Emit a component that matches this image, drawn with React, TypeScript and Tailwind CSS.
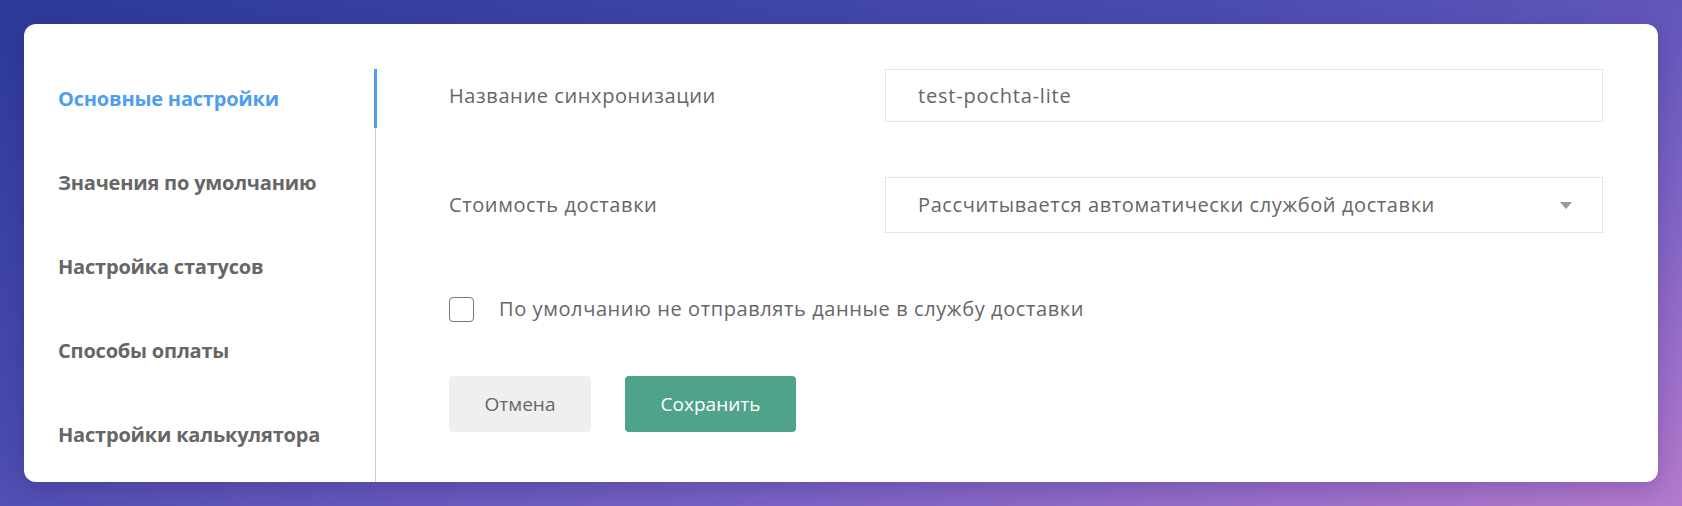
import { useState } from "react"

const navItems = [
  "Основные настройки",
  "Значения по умолчанию",
  "Настройка статусов",
  "Способы оплаты",
  "Настройки калькулятора",
]

export default function App() {
  const [active, setActive] = useState(0)
  const [name, setName] = useState("test-pochta-lite")
  const [skipSend, setSkipSend] = useState(false)

  return (
    <div
      className="min-h-[506px] w-full p-6 bg-[linear-gradient(160deg,#2c3a98_0%,#4a4cb0_40%,#7a62c4_70%,#b57acd_100%)]"
      style={{ fontFamily: '"Open Sans", "Noto Sans", sans-serif' }}
    >
      <div className="flex h-[458px] rounded-xl bg-white pt-[45px] shadow-[0_6px_24px_rgba(40,20,90,0.25)]">
        {/* sidebar */}
        <nav className="flex w-[352px] shrink-0 flex-col gap-[25px] border-r border-[#cfcfcf] pl-[34px]">
          {navItems.map((item, i) => (
            <button
              key={item}
              onClick={() => setActive(i)}
              className={`relative flex h-[59px] items-center text-left text-[20px] font-bold tracking-[-0.2px] ${
                i === active ? "text-[#4d9ef0]" : "text-[#666666]"
              }`}
            >
              {item}
              {i === active && <span className="absolute -right-[2px] top-0 h-full w-[3px] bg-[#4d9ef0]" />}
            </button>
          ))}
        </nav>

        {/* form */}
        <div className="flex flex-1 flex-col pl-[73px] pr-[55px] text-[20px] tracking-[0.6px] text-[#666666]">
          <div className="flex h-[53px] items-center">
            <label className="w-[436px] shrink-0">Название синхронизации</label>
            <input
              value={name}
              onChange={(e) => setName(e.target.value)}
              className="h-full flex-1 border border-[#e3e3e3] px-8 tracking-[0.8px] text-[#666666] outline-none"
            />
          </div>

          <div className="mt-[55px] flex h-[56px] items-center">
            <label className="w-[436px] shrink-0">Стоимость доставки</label>
            <div className="flex h-full flex-1 items-center justify-between border border-[#e3e3e3] pl-8 pr-[30px]">
              <span>Рассчитывается автоматически службой доставки</span>
              <svg width="12" height="7" viewBox="0 0 12 7">
                <path d="M0 0h12L6 7z" fill="#9a9a9a" />
              </svg>
            </div>
          </div>

          <label className="mt-[63px] flex h-[26px] cursor-pointer items-center gap-[25px]">
            <span
              onClick={() => setSkipSend(!skipSend)}
              className="flex h-[25px] w-[25px] items-center justify-center rounded-[4px] border-[1.5px] border-[#777777]"
            >
              {skipSend && (
                <svg width="14" height="11" viewBox="0 0 14 11">
                  <path d="M1 5.5l4 4L13 1" stroke="#666" strokeWidth="2" fill="none" />
                </svg>
              )}
            </span>
            <span>По умолчанию не отправлять данные в службу доставки</span>
          </label>

          <div className="mt-[54px] flex gap-[34px] text-[19px] tracking-normal">
            <button className="h-[56px] w-[142px] rounded-[4px] bg-[#efefef] text-[#666666]">Отмена</button>
            <button className="h-[56px] w-[171px] rounded-[4px] bg-[#4fa38a] text-white">Сохранить</button>
          </div>
        </div>
      </div>
    </div>
  )
}
